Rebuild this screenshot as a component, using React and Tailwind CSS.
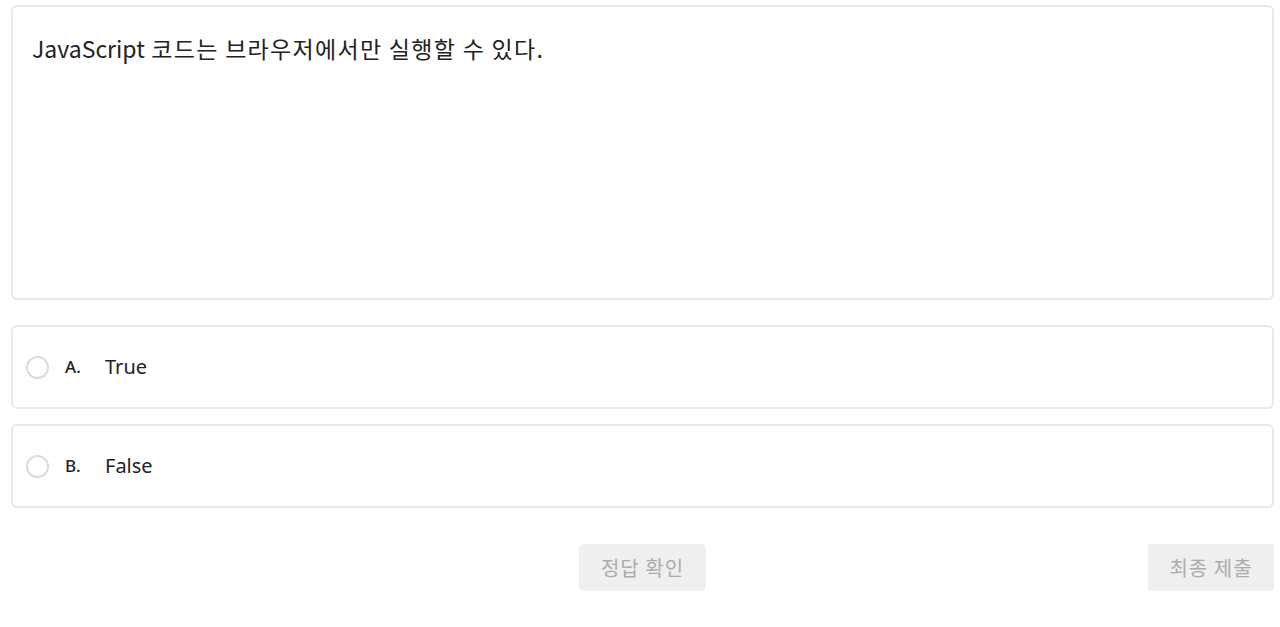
import React, { useState } from "react";

const options = [
  { key: "A.", label: "True" },
  { key: "B.", label: "False" },
];

const App = () => {
  const [picked, setPicked] = useState(null);

  return (
    <div
      className="min-h-screen bg-white pl-[11px] pr-[6px] pt-[5px] text-[#222]"
      style={{ fontFamily: '"Noto Sans", "Noto Sans CJK KR", sans-serif' }}
    >
      {/* question */}
      <div className="h-[295px] rounded-md border-2 border-[#e6e9f0] px-[19px] pt-[26px]">
        <p
          className="text-[23px] leading-[30px] tracking-[1.3px]"
          style={{ fontFamily: '"Noto Sans CJK KR", sans-serif' }}
        >
          <span className="tracking-normal">JavaScript</span> 코드는 브라우저에서만 실행할 수 있다.
        </p>
      </div>

      {/* options */}
      <div className="mt-[25px] flex flex-col gap-[15px]">
        {options.map((o) => (
          <label
            key={o.key}
            className="flex h-[84px] cursor-pointer items-center rounded-md border-2 border-[#e6e9f0] pl-[13px]"
          >
            <input
              type="radio"
              name="answer"
              checked={picked === o.key}
              onChange={() => setPicked(o.key)}
              className="sr-only"
            />
            <span className="h-[23px] w-[23px] rounded-full border-2 border-[#dcdcdc]" />
            <span className="ml-[16px] w-[40px] text-[17px] font-medium">{o.key}</span>
            <span className="text-[20px]">{o.label}</span>
          </label>
        ))}
      </div>

      {/* actions */}
      <div
        className="mt-[36px] grid grid-cols-3 items-center"
        style={{ fontFamily: '"Noto Sans CJK KR", sans-serif' }}
      >
        <div />
        <div className="flex justify-center">
          <button
            disabled
            className="h-[47px] w-[127px] rounded-[5px] bg-[#efefef] text-[20px] tracking-[1px] text-[#ababab]"
          >
            정답 확인
          </button>
        </div>
        <div className="flex justify-end">
          <button
            disabled
            className="h-[47px] w-[126px] rounded-[3px] bg-[#efefef] text-[20px] tracking-[1px] text-[#ababab]"
          >
            최종 제출
          </button>
        </div>
      </div>
    </div>
  );
};

export default App;
